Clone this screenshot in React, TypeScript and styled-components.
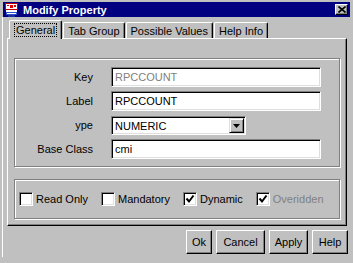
import React from "react";
import styled, { createGlobalStyle } from "styled-components";

const Global = createGlobalStyle`
  html, body { margin: 0; padding: 0; background: #c0c0c0; }
  body { font-family: "Liberation Sans", Arial, sans-serif; font-size: 11px; }
  * { box-sizing: border-box; }
`;

const Window = styled.div`
  width: 353px;
  height: 263px;
  background: #c0c0c0;
  overflow: hidden;
  display: flex;
  flex-direction: column;
`;

const TitleBar = styled.div`
  margin: 2px 3px 0 3px;
  height: 15px;
  background: #000080;
  display: flex;
  align-items: center;
  padding: 0 2px 0 2px;
`;

const TitleText = styled.span`
  color: #fff;
  font-weight: bold;
  font-size: 11px;
  margin-left: 5px;
  flex: 1;
  white-space: nowrap;
`;

const CloseButton = styled.div`
  width: 13px;
  height: 11px;
  background: #c0c0c0;
  border-top: 1px solid #fff;
  border-left: 1px solid #fff;
  border-right: 1px solid #000;
  border-bottom: 1px solid #000;
  box-shadow: inset -1px -1px #808080;
  display: flex;
  align-items: center;
  justify-content: center;
`;

const Frame = styled.div`
  margin-left: 2px;
  border-left: 1px solid #fff;
  height: 240px;
  padding: 3px 6px 0 4px;
  display: flex;
  flex-direction: column;
`;

const TabStrip = styled.div`
  display: flex;
  align-items: flex-end;
  height: 18px;
  padding-left: 2px;
`;

const Tab = styled.div<{ $active?: boolean }>`
  height: ${(p) => (p.$active ? 19 : 16)}px;
  margin-bottom: ${(p) => (p.$active ? -1 : 0)}px;
  margin-right: 1px;
  padding: 0 4px;
  display: flex;
  align-items: center;
  justify-content: center;
  background: #c0c0c0;
  border-top: 1px solid #fff;
  border-left: 1px solid #fff;
  border-right: 1px solid #000;
  box-shadow: inset -1px 0 #808080;
  border-radius: 2px 2px 0 0;
  position: relative;
  z-index: ${(p) => (p.$active ? 1 : 0)};
  color: #000;
  white-space: nowrap;
`;

const Focus = styled.span`
  border: 1px dotted #000;
  padding: 0 1px;
  line-height: 12px;
`;

const Panel = styled.div`
  width: 340px;
  height: 188px;
  border-top: 1px solid #fff;
  border-left: 1px solid #fff;
  border-right: 1px solid #000;
  border-bottom: 1px solid #000;
  box-shadow: inset -1px -1px #808080;
  padding: 19px 0 0 6px;
  display: flex;
  flex-direction: column;
`;

const Group = styled.div<{ $h: number; $mt?: number }>`
  width: 326px;
  height: ${(p) => p.$h}px;
  margin-top: ${(p) => p.$mt ?? 0}px;
  border: 1px solid #808080;
  box-shadow: inset 1px 1px #fff, 1px 1px #fff;
`;

const FieldGrid = styled.div`
  display: grid;
  grid-template-columns: 78px 1fr;
  column-gap: 18px;
  row-gap: 4px;
  grid-auto-rows: 20px;
  align-items: center;
  padding-top: 8px;
`;

const Label = styled.label`
  text-align: right;
  color: #000;
  white-space: nowrap;
`;

const Sunken = `
  background: #fff;
  border-top: 1px solid #808080;
  border-left: 1px solid #808080;
  border-bottom: 1px solid #fff;
  border-right: 1px solid #fff;
  box-shadow: inset 1px 1px #000, inset -1px -1px #dfdfdf;
`;

const TextInput = styled.input<{ $disabled?: boolean }>`
  ${Sunken}
  width: 210px;
  height: 20px;
  margin: 0;
  padding: 0 0 0 3px;
  font: inherit;
  font-size: 11px;
  outline: none;
  color: ${(p) => (p.$disabled ? "#808080" : "#000")};
`;

const Select = styled.div`
  ${Sunken}
  width: 135px;
  height: 19px;
  display: flex;
  align-items: center;
  padding: 2px 1px 1px 3px;
  color: #000;
`;

const SelectText = styled.span`
  flex: 1;
`;

const ArrowButton = styled.div`
  width: 15px;
  height: 15px;
  background: #c0c0c0;
  border-top: 1px solid #dfdfdf;
  border-left: 1px solid #dfdfdf;
  border-right: 1px solid #000;
  border-bottom: 1px solid #000;
  box-shadow: inset 1px 1px #fff, inset -1px -1px #808080;
  display: flex;
  align-items: center;
  justify-content: center;
`;

const CheckRow = styled.div`
  display: flex;
  align-items: center;
  height: 100%;
  padding-left: 4px;
  gap: 13px;
`;

const CheckItem = styled.div<{ $disabled?: boolean }>`
  display: flex;
  align-items: center;
  color: ${(p) => (p.$disabled ? "#808080" : "#000")};
  white-space: nowrap;
`;

const CheckBox = styled.div`
  ${Sunken}
  width: 14px;
  height: 14px;
  margin-right: 3px;
  display: flex;
  align-items: center;
  justify-content: center;
`;

const ButtonRow = styled.div`
  display: flex;
  justify-content: flex-end;
  gap: 4px;
  margin-top: 4px;
  margin-right: -1px;
`;

const Button = styled.div<{ $w: number }>`
  width: ${(p) => p.$w}px;
  height: 24px;
  background: #c0c0c0;
  border-top: 1px solid #fff;
  border-left: 1px solid #fff;
  border-right: 1px solid #000;
  border-bottom: 1px solid #000;
  box-shadow: inset -1px -1px #808080;
  display: flex;
  align-items: center;
  justify-content: center;
  color: #000;
  white-space: nowrap;
`;

const AppIcon = () => (
  <svg width="13" height="14" viewBox="0 0 13 14">
    <rect x="0.5" y="0.5" width="12" height="6" fill="#fff" stroke="#c00000" />
    <path d="M2 2h2v1H2zM5 2h3v3H5zM9 2h2v2H9z" fill="#e00000" />
    <rect x="1" y="7" width="11" height="2" fill="#fff" />
    <rect x="1" y="9" width="11" height="3" fill="#3050d0" />
    <rect x="2" y="10" width="9" height="1" fill="#fff" />
    <rect x="3" y="12" width="7" height="2" fill="#1830a0" />
  </svg>
);

const Check = () => (
  <svg width="10" height="10" viewBox="0 0 10 10">
    <path d="M1.5 4.5 L4 7.5 L8.5 1.5" fill="none" stroke="#000" strokeWidth="2" />
  </svg>
);

export default function App() {
  return (
    <Window>
      <Global />
      <TitleBar>
        <AppIcon />
        <TitleText>Modify Property</TitleText>
        <CloseButton>
          <svg width="8" height="7" viewBox="0 0 8 7">
            <path d="M0.5 0.5 L7.5 6.5 M7.5 0.5 L0.5 6.5" stroke="#000" strokeWidth="1.6" />
          </svg>
        </CloseButton>
      </TitleBar>
      <Frame>
        <TabStrip>
          <Tab $active>
            <Focus>General</Focus>
          </Tab>
          <Tab>Tab Group</Tab>
          <Tab>Possible Values</Tab>
          <Tab>Help Info</Tab>
        </TabStrip>
        <Panel>
          <Group $h={109}>
            <FieldGrid>
              <Label>Key</Label>
              <TextInput $disabled readOnly value="RPCCOUNT" />
              <Label>Label</Label>
              <TextInput readOnly value="RPCCOUNT" />
              <Label>ype</Label>
              <Select>
                <SelectText>NUMERIC</SelectText>
                <ArrowButton>
                  <svg width="7" height="4" viewBox="0 0 7 4">
                    <path d="M0 0 H7 L3.5 4 Z" fill="#000" />
                  </svg>
                </ArrowButton>
              </Select>
              <Label>Base Class</Label>
              <TextInput readOnly value="cmi" />
            </FieldGrid>
          </Group>
          <Group $h={40} $mt={12}>
            <CheckRow>
              <CheckItem>
                <CheckBox />
                Read Only
              </CheckItem>
              <CheckItem>
                <CheckBox />
                Mandatory
              </CheckItem>
              <CheckItem>
                <CheckBox>
                  <Check />
                </CheckBox>
                Dynamic
              </CheckItem>
              <CheckItem $disabled>
                <CheckBox>
                  <Check />
                </CheckBox>
                Overidden
              </CheckItem>
            </CheckRow>
          </Group>
        </Panel>
        <ButtonRow>
          <Button $w={26}>Ok</Button>
          <Button $w={49}>Cancel</Button>
          <Button $w={39}>Apply</Button>
          <Button $w={36}>Help</Button>
        </ButtonRow>
      </Frame>
    </Window>
  );
}
